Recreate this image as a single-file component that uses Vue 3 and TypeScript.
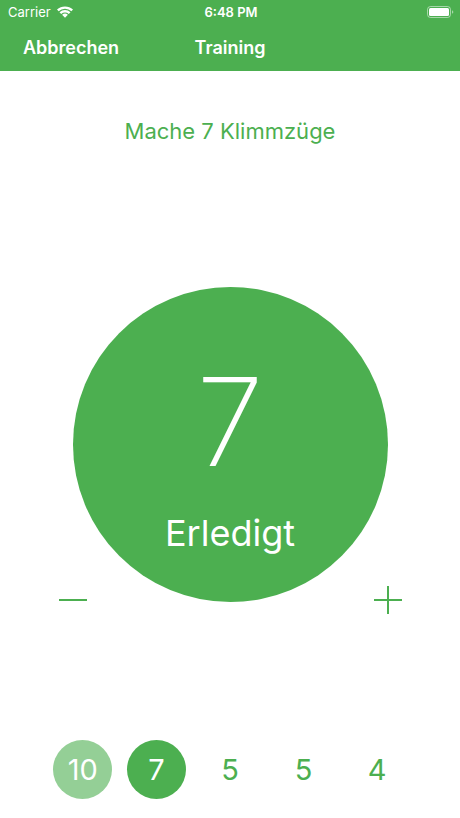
<script setup lang="ts">
import { ref } from 'vue'

type SetState = 'done' | 'current' | 'upcoming'

interface TrainingSet {
  reps: number
  state: SetState
}

const reps = ref<number>(7)
const goal = 7

const sets: TrainingSet[] = [
  { reps: 10, state: 'done' },
  { reps: 7, state: 'current' },
  { reps: 5, state: 'upcoming' },
  { reps: 5, state: 'upcoming' },
  { reps: 4, state: 'upcoming' },
]

function change(step: number): void {
  reps.value = Math.max(0, reps.value + step)
}
</script>

<template>
  <div class="screen">
    <header class="header">
      <div class="status">
        <div class="carrier">
          <span>Carrier</span>
          <svg class="wifi" viewBox="0 0 16 12" aria-hidden="true">
            <path d="M0 3.6a11.6 11.6 0 0 1 16 0l-1.6 1.7a9.3 9.3 0 0 0-12.8 0z" />
            <path d="M2.5 6.2a8 8 0 0 1 11 0l-1.7 1.7a5.6 5.6 0 0 0-7.6 0z" />
            <path d="M5.1 8.8a4.2 4.2 0 0 1 5.8 0L8 11.8z" />
          </svg>
        </div>
        <span class="clock">6:48 PM</span>
        <svg class="battery" viewBox="0 0 27 12" aria-hidden="true">
          <rect class="shell" x="0.5" y="0.5" width="23" height="11" rx="3" />
          <rect x="2" y="2" width="20" height="8" rx="1.5" />
          <path class="cap" d="M25 4.2c1.8 0.6 1.8 3 0 3.6z" />
        </svg>
      </div>
      <nav class="bar">
        <button type="button" class="cancel">Abbrechen</button>
        <h1 class="title">Training</h1>
      </nav>
    </header>

    <main class="content">
      <p class="task">Mache {{ goal }} Klimmzüge</p>

      <section class="stage">
        <div class="dial">
          <button type="button" class="finish">
            <span class="count">{{ reps }}</span>
            <span class="label">Erledigt</span>
          </button>
          <button type="button" class="step minus" aria-label="Weniger" @click="change(-1)">
            <svg viewBox="0 0 28 28" aria-hidden="true"><path d="M0 14h28" /></svg>
          </button>
          <button type="button" class="step plus" aria-label="Mehr" @click="change(1)">
            <svg viewBox="0 0 28 28" aria-hidden="true"><path d="M0 14h28M14 0v28" /></svg>
          </button>
        </div>
      </section>

      <ol class="sets">
        <li v-for="(set, index) in sets" :key="index" class="set" :class="set.state">
          <span>{{ set.reps }}</span>
        </li>
      </ol>
    </main>
  </div>
</template>

<style>
body {
  margin: 0;
  background: #fff;
}
</style>

<style scoped>
.screen {
  display: flex;
  flex-direction: column;
  min-height: 100vh;
  color: #4caf50;
  font-family: Inter, "Liberation Sans", sans-serif;
}

button {
  padding: 0;
  border: 0;
  background: none;
  color: inherit;
  font: inherit;
  cursor: pointer;
}

.header {
  background: #4caf50;
  color: #fff;
}

.status {
  display: grid;
  grid-template-columns: 1fr auto 1fr;
  align-items: center;
  height: 24px;
  padding: 0 6px 0 8px;
  font-size: 13px;
  line-height: 24px;
}

.carrier {
  display: flex;
  align-items: center;
  gap: 6px;
}

.wifi {
  width: 16px;
  height: 12px;
  fill: #fff;
}

.clock {
  font-weight: 600;
}

.battery {
  justify-self: end;
  width: 27px;
  height: 12px;
  fill: #fff;
}

.shell {
  fill: none;
  stroke: #fff;
  stroke-opacity: 0.5;
}

.cap {
  fill-opacity: 0.5;
}

.bar {
  display: grid;
  grid-template-columns: 1fr auto 1fr;
  align-items: center;
  height: 47px;
  padding: 0 23px;
}

.cancel {
  justify-self: start;
  font-size: 18px;
  font-weight: 600;
}

.title {
  margin: 0;
  font-size: 18px;
  font-weight: 600;
}

.content {
  display: flex;
  flex: 1;
  flex-direction: column;
  padding: 44px 0 19px;
}

.task {
  margin: 0;
  font-size: 22px;
  line-height: 32px;
  text-align: center;
}

.stage {
  display: flex;
  flex: 1;
  align-items: center;
  justify-content: center;
  padding-top: 2px;
}

.dial {
  display: grid;
  grid-template-rows: 20px auto 20px;
  grid-template-columns: 22px auto 22px;
}

.finish {
  display: flex;
  grid-row: 2;
  grid-column: 2;
  flex-direction: column;
  align-items: center;
  box-sizing: border-box;
  width: 315px;
  height: 315px;
  padding-top: 73px;
  border-radius: 50%;
  background: #4caf50;
  color: #fff;
}

.count {
  font-size: 122px;
  font-weight: 200;
  line-height: 124px;
}

.label {
  margin-top: 23px;
  font-size: 36px;
  line-height: 52px;
}

.step {
  display: grid;
  grid-row: 2 / 4;
  place-items: center;
  align-self: end;
  width: 44px;
  height: 44px;
}

.step svg {
  width: 28px;
  height: 28px;
  fill: none;
  stroke: #4caf50;
  stroke-width: 2;
}

.minus {
  grid-column: 1 / 3;
  justify-self: start;
}

.plus {
  grid-column: 2 / 4;
  justify-self: end;
}

.sets {
  display: grid;
  grid-template-columns: repeat(5, 1fr);
  justify-items: center;
  width: 80%;
  margin: 0 auto;
  padding: 0;
  list-style: none;
}

.set {
  display: grid;
  place-items: center;
  width: 59px;
  height: 59px;
  border-radius: 50%;
  font-size: 29px;
}

.done {
  background: #94cf96;
  color: #fff;
}

.current {
  background: #4caf50;
  color: #fff;
}
</style>
